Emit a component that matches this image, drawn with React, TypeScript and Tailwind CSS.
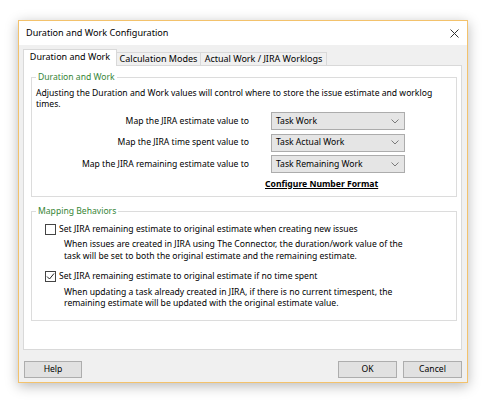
import React from 'react';

const font = { fontFamily: '"Segoe UI", "Noto Sans", "Open Sans", sans-serif' };

const Chevron = () => (
  <svg width="8" height="5" viewBox="0 0 8 5" className="shrink-0">
    <path d="M0.5 0.5 L4 4 L7.5 0.5" fill="none" stroke="#7a7a7a" strokeWidth="1" />
  </svg>
);

const Select: React.FC<{ value: string }> = ({ value }) => (
  <div className="w-[134px] h-[18px] flex items-center justify-between bg-[#e5e5e5] border border-[#acacac] pl-[4px] pr-[5px] text-[8.6px] text-black">
    <span>{value}</span>
    <Chevron />
  </div>
);

const CheckBox: React.FC<{ checked?: boolean }> = ({ checked }) => (
  <div className="w-[11px] h-[11px] border border-[#444444] bg-white flex items-center justify-center shrink-0">
    {checked && (
      <svg width="9" height="9" viewBox="0 0 9 9">
        <path d="M1 4.5 L3.5 7 L8 1.5" fill="none" stroke="#222" strokeWidth="1" />
      </svg>
    )}
  </div>
);

const mappings = [
  { label: 'Map the JIRA estimate value to', value: 'Task Work' },
  { label: 'Map the JIRA time spent value to', value: 'Task Actual Work' },
  { label: 'Map the JIRA remaining estimate value to', value: 'Task Remaining Work' },
];

export default function App() {
  return (
    <div className="w-[489px] h-[417px] bg-white pl-[18px] pt-[20px]" style={font}>
      <div className="w-[450px] h-[363px] border border-[#f3c26c] bg-[#f0f0f0] flex flex-col shadow-[0_3px_12px_rgba(0,0,0,0.28)]">
        {/* title bar */}
        <div className="h-[24px] bg-white flex items-center justify-between pl-[7px] pr-[8px]">
          <span className="text-[9.1px] text-black">Duration and Work Configuration</span>
          <svg width="9" height="9" viewBox="0 0 9 9">
            <path d="M0.5 0.5 L8.5 8.5 M8.5 0.5 L0.5 8.5" stroke="#333" strokeWidth="1" />
          </svg>
        </div>

        {/* tabs */}
        <div className="pt-[4px] pl-[4px] h-[20px] flex items-end text-[9px] text-black">
          <div className="relative z-10 -mb-px w-[94px] h-[17px] bg-white border border-b-0 border-[#d9d9d9] flex items-center justify-center pb-[2px]">
            Duration and Work
          </div>
          <div className="-ml-px w-[85px] h-[13px] bg-[#f0f0f0] border border-b-0 border-[#d9d9d9] flex items-center justify-center">
            Calculation Modes
          </div>
          <div className="-ml-px w-[127px] h-[13px] bg-[#f0f0f0] border border-b-0 border-[#d9d9d9] flex items-center justify-center">
            Actual Work / JIRA Worklogs
          </div>
        </div>

        {/* panel */}
        <div className="ml-[4px] w-[439px] h-[285px] bg-white border border-[#d9d9d9] pt-[5px] pl-[7px] text-[8.6px] text-black">
          <fieldset className="w-[426px] border border-[#dcdcdc] pb-[6px]">
            <legend className="ml-[4px] px-[2px] leading-[12px] text-[#368536]">Duration and Work</legend>
            <p className="mt-[5px] pl-[4px] pr-[6px] leading-[11px]">
              Adjusting the Duration and Work values will control where to store the issue estimate and worklog times.
            </p>
            <div className="mt-[2px] flex flex-col gap-[3.5px]">
              {mappings.map((m) => (
                <div key={m.label} className="flex items-center h-[18px]">
                  <span className="w-[217px] text-right">{m.label}</span>
                  <div className="ml-[22px]">
                    <Select value={m.value} />
                  </div>
                </div>
              ))}
            </div>
            <div className="mt-[6px] ml-[233px] leading-[11px] font-bold underline">Configure Number Format</div>
          </fieldset>

          <fieldset className="mt-[8px] w-[426px] border border-[#dcdcdc] pb-[11px]">
            <legend className="ml-[4px] px-[2px] leading-[12px] text-[#368536]">Mapping Behaviors</legend>
            <div className="mt-[7px] pl-[13px] flex items-center gap-[3px] h-[11px]">
              <CheckBox />
              <span>Set JIRA remaining estimate to original estimate when creating new issues</span>
            </div>
            <p className="mt-[4px] pl-[32px] leading-[11.5px]">
              When issues are created in JIRA using The Connector, the duration/work value of the
              <br />
              task will be set to both the original estimate and the remaining estimate.
            </p>
            <div className="mt-[9px] pl-[13px] flex items-center gap-[3px] h-[11px]">
              <CheckBox checked />
              <span>Set JIRA remaining estimate to original estimate if no time spent</span>
            </div>
            <p className="mt-[5px] pl-[32px] leading-[11px]">
              When updating a task already created in JIRA, if there is no current timespent, the
              <br />
              remaining estimate will be updated with the original estimate value.
            </p>
          </fieldset>
        </div>

        {/* buttons */}
        <div className="mt-[11px] px-[5px] flex items-center text-[8.6px] text-black">
          <button className="w-[58px] h-[17px] bg-[#e1e1e1] border border-[#adadad]">Help</button>
          <div className="flex-1" />
          <button className="w-[59px] h-[17px] bg-[#e1e1e1] border border-[#adadad]">OK</button>
          <button className="ml-[6px] w-[59px] h-[17px] bg-[#e1e1e1] border border-[#adadad]">Cancel</button>
        </div>
      </div>
    </div>
  );
}
